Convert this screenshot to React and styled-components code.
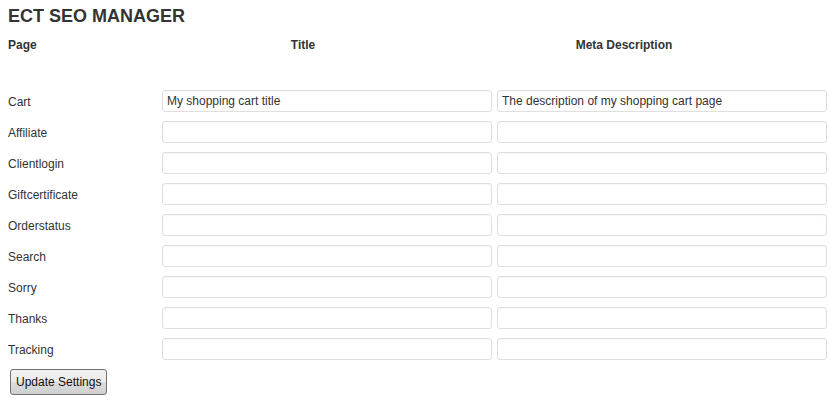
import React from 'react';
import { styled, createGlobalStyle } from 'styled-components';

const GlobalStyle = createGlobalStyle`
    html, body {
        margin: 0;
        padding: 0;
        background: #fff;
        font-family: "Liberation Sans", Arial, sans-serif;
        color: #333;
    }
`;

const pages = [
    { name: 'Cart', title: 'My shopping cart title', desc: 'The description of my shopping cart page' },
    { name: 'Affiliate' },
    { name: 'Clientlogin' },
    { name: 'Giftcertificate' },
    { name: 'Orderstatus' },
    { name: 'Search' },
    { name: 'Sorry' },
    { name: 'Thanks' },
    { name: 'Tracking' },
];

function App() {
    return (
        <>
            <GlobalStyle />
            <Wrapper>
                <Heading>ECT SEO MANAGER</Heading>
                <HeaderRow>
                    <HeaderCell $align="left">Page</HeaderCell>
                    <HeaderCell>Title</HeaderCell>
                    <HeaderCell>Meta Description</HeaderCell>
                </HeaderRow>
                <Rows>
                    {pages.map((p) => (
                        <Row key={p.name}>
                            <Label>{p.name}</Label>
                            <Field defaultValue={p.title || ''} />
                            <Field defaultValue={p.desc || ''} />
                        </Row>
                    ))}
                </Rows>
                <Button type="button">Update Settings</Button>
            </Wrapper>
        </>
    );
}

export default App;

const Wrapper = styled.div`
    padding: 6px 8px 0 8px;
`;

const Heading = styled.h1`
    margin: 0;
    font-size: 18px;
    line-height: 20px;
    font-weight: bold;
    color: #333;
`;

const HeaderRow = styled.div`
    display: grid;
    grid-template-columns: 154px 282px 360px;
    margin-top: 12px;
`;

const HeaderCell = styled.div`
    font-size: 12px;
    line-height: 14px;
    font-weight: bold;
    color: #333;
    text-align: ${(p) => p.$align || 'center'};
`;

const Rows = styled.div`
    display: flex;
    flex-direction: column;
    gap: 9px;
    margin-top: 38px;
`;

const Row = styled.div`
    display: grid;
    grid-template-columns: 149px 330px 330px;
    column-gap: 5px;
    align-items: center;
`;

const Label = styled.div`
    font-size: 12px;
    line-height: 14px;
    color: #333;
    padding-top: 2px;
`;

const Field = styled.input`
    box-sizing: border-box;
    height: 22px;
    width: 100%;
    margin: 0;
    padding: 0 4px;
    border: 1px solid #dfdfdf;
    border-radius: 3px;
    box-shadow: inset 0 1px 2px rgba(0, 0, 0, 0.04);
    background: #fff;
    font-family: "Liberation Sans", Arial, sans-serif;
    font-size: 12px;
    color: #333;
    outline: none;
`;

const Button = styled.button`
    box-sizing: border-box;
    display: block;
    margin: 9px 0 0 2px;
    height: 26px;
    padding: 0 5px;
    white-space: nowrap;
    border: 1px solid #707070;
    border-radius: 3px;
    background: linear-gradient(#f2f2f2, #ebebeb 50%, #dddddd 51%, #cfcfcf);
    font-family: "Liberation Sans", Arial, sans-serif;
    font-size: 12px;
    color: #111;
    cursor: pointer;
`;
